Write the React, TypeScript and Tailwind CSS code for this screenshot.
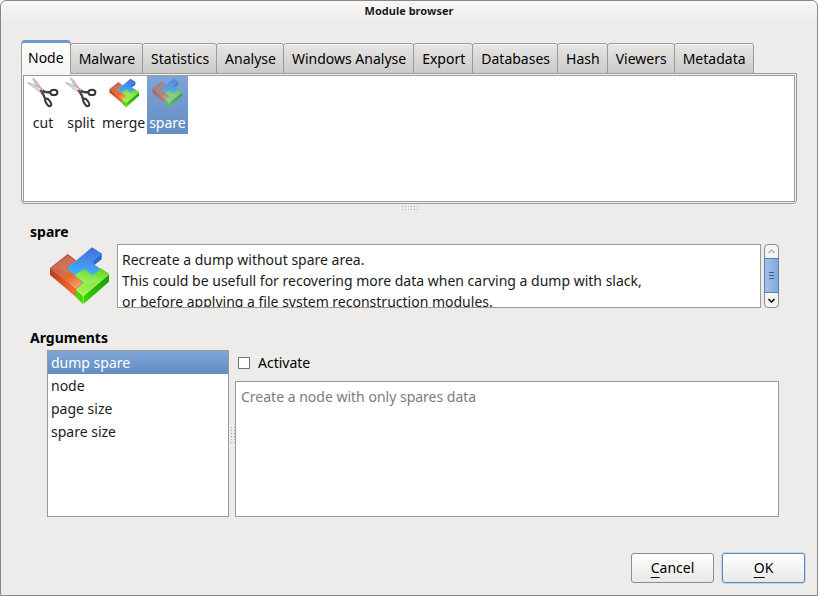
import { useState } from 'react';

const tabs = [
  'Node',
  'Malware',
  'Statistics',
  'Analyse',
  'Windows Analyse',
  'Export',
  'Databases',
  'Hash',
  'Viewers',
  'Metadata',
];

const description = `Recreate a dump without spare area.
This could be usefull for recovering more data when carving a dump with slack,
or before applying a file system reconstruction modules.`;

const argumentNames = ['dump spare', 'node', 'page size', 'spare size'];

const selectedFill = 'bg-linear-to-b from-[#7fa5d7] to-[#658dc2] text-white';

function ScissorsIcon() {
  return (
    <svg viewBox="0 0 32 32" className="size-8" aria-hidden="true">
      <path d="M5.5 1.2 L8.6 3 L16.6 14.6 L14.6 16.6 L12 14Z" fill="#c9c9c9" stroke="#8f8f8f" strokeWidth="0.5" />
      <path d="M0.4 5.6 L4 6.4 L17 12.6 L16 15.4 L12.6 14.8Z" fill="#dedede" stroke="#858585" strokeWidth="0.5" />
      <path d="M15.5 13.6 Q19 16.2 23.6 14.8" fill="none" stroke="#3c3f41" strokeWidth="2.4" />
      <path d="M14.8 15 Q17 18 18.2 22.4" fill="none" stroke="#3c3f41" strokeWidth="2.2" />
      <ellipse cx="26.9" cy="15.4" rx="3.5" ry="2.6" fill="none" stroke="#36393b" strokeWidth="2" />
      <ellipse cx="21.2" cy="25.4" rx="2.1" ry="4.2" transform="rotate(-34 21.2 25.4)" fill="none" stroke="#36393b" strokeWidth="2" />
      <circle cx="14" cy="13.8" r="1.2" fill="#d42020" />
    </svg>
  );
}

function BlocksIcon({ id, className }: { id: string; className: string }) {
  return (
    <svg viewBox="0 0 64 64" className={className} aria-hidden="true">
      <defs>
        <linearGradient id={`${id}-red`} x1="0.3" y1="0" x2="0.8" y2="1">
          <stop offset="0" stopColor="#b5523f" />
          <stop offset="0.5" stopColor="#d8704c" />
          <stop offset="0.6" stopColor="#e8642c" />
          <stop offset="1" stopColor="#ffa670" />
        </linearGradient>
        <linearGradient id={`${id}-redside`} x1="0" y1="0" x2="1" y2="0.6">
          <stop offset="0" stopColor="#b5381c" />
          <stop offset="1" stopColor="#f56a32" />
        </linearGradient>
        <linearGradient id={`${id}-blue`} x1="0.7" y1="0" x2="0.6" y2="1">
          <stop offset="0" stopColor="#3f6fd8" />
          <stop offset="0.5" stopColor="#4a8cea" />
          <stop offset="1" stopColor="#35b4ff" />
        </linearGradient>
        <linearGradient id={`${id}-green`} x1="0.6" y1="0" x2="0.35" y2="1">
          <stop offset="0" stopColor="#5cd80c" />
          <stop offset="0.4" stopColor="#92e85c" />
          <stop offset="1" stopColor="#c4ff7c" />
        </linearGradient>
        <linearGradient id={`${id}-greenside`} x1="0" y1="1" x2="1" y2="0">
          <stop offset="0" stopColor="#58e000" />
          <stop offset="0.5" stopColor="#2cb80c" />
          <stop offset="1" stopColor="#149a08" />
        </linearGradient>
      </defs>
      <path d="M3 24.3 L29 45.3 V53 L3 31Z" fill={`url(#${id}-redside)`} />
      <path d="M3 24.3 L20.7 10.3 L28.7 16.3 L19.7 24.3 L36.3 38.7 L29 45.7Z" fill={`url(#${id}-red)`} stroke="#c04a30" strokeWidth="0.6" />
      <path d="M4.5 24.3 L20.7 11.6 L27 16.7 L18 24.3 L22 28 Q13 25 4.5 24.3Z" fill="#fff" fillOpacity="0.1" />
      <path d="M29 45.3 L36.3 52 L62 30 V37.7 L36.3 60.3 L29 53Z" fill={`url(#${id}-greenside)`} />
      <path d="M29 45.3 L36.3 52 V60.3 L29 53Z" fill="#4cd40c" />
      <path d="M27 31 L36 24 L44.7 31 L53.7 24.7 L62 30 L36.3 52 L29 45.3 L36.3 38.7Z" fill={`url(#${id}-green)`} stroke="#48c018" strokeWidth="0.6" />
      <path d="M29 45.3 L36.3 52 L62 30" fill="none" stroke="#c4ff90" strokeWidth="0.7" />
      <path d="M36.3 52 V60" stroke="#a8f46c" strokeWidth="0.8" />
      <path d="M38 39 Q52 38 60 31.5 L36.3 51 L30 45.3Z" fill="#7ae818" fillOpacity="0.45" />
      <path d="M54.7 9.2 V15.3 L47.5 21 L45 17.6Z" fill="#2c68d0" />
      <path d="M19.7 24.3 L45 3.3 L54.7 9.4 L46 17 L47.5 20.4 L53.7 24.9 L45.3 31 L37.5 25 L27.5 31Z" fill={`url(#${id}-blue)`} />
    </svg>
  );
}

const modules = [
  { name: 'cut', icon: <ScissorsIcon /> },
  { name: 'split', icon: <ScissorsIcon /> },
  { name: 'merge', icon: <BlocksIcon id="merge" className="size-8" /> },
  { name: 'spare', icon: <BlocksIcon id="spare" className="size-8" /> },
];

function Grip({ className }: { className: string }) {
  return (
    <span
      aria-hidden="true"
      className={`bg-[linear-gradient(#edecea_2px,transparent_2px),linear-gradient(90deg,#edecea_2px,#a9a7a5_2px)] bg-size-[3px_3px] ${className}`}
    />
  );
}

export default function App() {
  const [tab, setTab] = useState('Node');
  const [module, setModule] = useState('spare');
  const [argument, setArgument] = useState('dump spare');

  return (
    <div className="flex min-h-screen flex-col rounded-t-md border border-[#8a8887] bg-[#edecea] bg-linear-to-b from-[#f8f8f7] to-[#edecea] to-[20px] font-['Noto_Sans','Open_Sans',sans-serif] text-sm text-[#1a1a1a]">
      <h1 className="h-[39px] pt-0.5 text-center text-[11px] leading-4 font-bold [text-shadow:1px_1px_0_#fff]">
        Module browser
      </h1>

      <main className="flex flex-1 flex-col px-5">
        <div role="tablist" className="-mb-px flex h-[34px] items-end text-black">
          {tabs.map((name) => (
            <button
              key={name}
              role="tab"
              aria-selected={tab === name}
              onClick={() => setTab(name)}
              className={
                tab === name
                  ? 'z-10 h-[34px] rounded-t border border-t-3 border-b-0 border-[#9c9a98] border-t-[#6f98cf] bg-linear-to-b from-[#fdfdfd] to-[#f4f4f3] px-1.5 pb-0.5'
                  : '-ml-px h-[31px] rounded-t-[3px] border border-[#9c9a98] bg-linear-to-b from-[#e8e7e6] to-[#cbcac8] pr-[7px] pl-2 shadow-[inset_0_1px_0_#f7f7f6]'
              }
            >
              {name}
            </button>
          ))}
        </div>

        <div role="tabpanel" className="rounded-b-sm border border-[#9c9a98] bg-[#f4f4f3] p-px">
          <div className="flex h-[127px] items-start border border-[#9c9a98] bg-white">
            {modules.map(({ name, icon }) => (
              <button
                key={name}
                onClick={() => setModule(name)}
                className={`flex h-[58px] min-w-[38px] flex-col items-center px-0.5 pt-px ${module === name ? selectedFill : ''}`}
              >
                <span className={module === name ? 'opacity-60' : ''}>{icon}</span>
                <span className="pt-1 leading-5">{name}</span>
              </button>
            ))}
          </div>
        </div>

        <div className="flex h-[18px] justify-center">
          <Grip className="h-1.5 w-[18px]" />
        </div>

        <div className="flex flex-1 flex-col pr-[18px] pl-[9px]">
          <h2 className="pb-0.5 leading-5 font-bold text-black">{module}</h2>
          <div className="flex h-16 pl-[17px]">
            <BlocksIcon id="large" className="mr-1.5 size-16 shrink-0" />
            <textarea
              readOnly
              aria-label="Module description"
              value={description}
              className="mr-[3px] min-w-0 flex-1 resize-none overflow-hidden border border-[#9c9a98] bg-white px-1 pt-1 leading-[21px] whitespace-pre outline-none"
            />
            <div className="flex w-[15px] flex-col rounded-sm border border-[#8d8b89] bg-[#f4f4f3]">
              <button aria-label="Scroll up" className="flex h-[13px] items-center justify-center">
                <svg viewBox="0 0 7 5" className="h-[5px] w-[7px]" aria-hidden="true">
                  <path d="M0.5 4 L3.5 1 L6.5 4" fill="none" stroke="#b0aeac" strokeWidth="1.3" />
                </svg>
              </button>
              <div className="-mx-px flex flex-1 flex-col items-center justify-center gap-0.5 border border-[#5b7fb2] bg-linear-to-r from-[#a3c2ea] to-[#80a8dc]">
                <span className="h-px w-[5px] bg-[#3f6191]" />
                <span className="h-px w-[5px] bg-[#3f6191]" />
                <span className="h-px w-[5px] bg-[#3f6191]" />
              </div>
              <button aria-label="Scroll down" className="flex h-[14px] items-center justify-center">
                <svg viewBox="0 0 7 5" className="h-[5px] w-[7px]" aria-hidden="true">
                  <path d="M0.5 1 L3.5 4 L6.5 1" fill="none" stroke="#1a1a1a" strokeWidth="1.6" />
                </svg>
              </button>
            </div>
          </div>

          <h2 className="pt-5 pb-0.5 leading-5 font-bold text-black">Arguments</h2>
          <div className="flex flex-1 pl-[17px]">
            <div role="listbox" aria-label="Arguments" className="w-[182px] border border-[#9c9a98] bg-white">
              {argumentNames.map((name) => (
                <button
                  key={name}
                  role="option"
                  aria-selected={argument === name}
                  onClick={() => setArgument(name)}
                  className={`block h-[23px] w-full px-[3px] text-left leading-[23px] ${argument === name ? selectedFill : ''}`}
                >
                  {name}
                </button>
              ))}
            </div>
            <div className="flex w-1.5 items-center justify-center">
              <Grip className="h-[18px] w-1.5" />
            </div>
            <div className="flex min-w-0 flex-1 flex-col">
              <label className="flex h-[31px] items-center gap-2 pb-[5px] pl-[3px] text-black">
                <input
                  type="checkbox"
                  className="size-3 appearance-none border border-[#777573] bg-white checked:bg-[#658dc2]"
                />
                Activate
              </label>
              <textarea
                readOnly
                aria-label="Argument description"
                value="Create a node with only spares data"
                className="flex-1 resize-none border border-[#9c9a98] bg-white px-[5px] pt-1 leading-[21px] text-[#7c7c7c] outline-none"
              />
            </div>
          </div>
        </div>
      </main>

      <footer className="flex justify-end gap-2 px-3 pt-9 pb-3 text-black">
        <button className="h-[30px] w-[83px] rounded-[3px] border border-[#8f8d8b] bg-linear-to-b from-white to-[#e9e9e7]">
          <span className="underline underline-offset-4">C</span>ancel
        </button>
        <button className="h-[30px] w-[83px] rounded-[3px] border border-[#6288b9] bg-linear-to-b from-white to-[#e9e9e7] shadow-[0_0_0_1px_#c3d4ea]">
          <span className="underline underline-offset-4">O</span>K
        </button>
      </footer>
    </div>
  );
}
